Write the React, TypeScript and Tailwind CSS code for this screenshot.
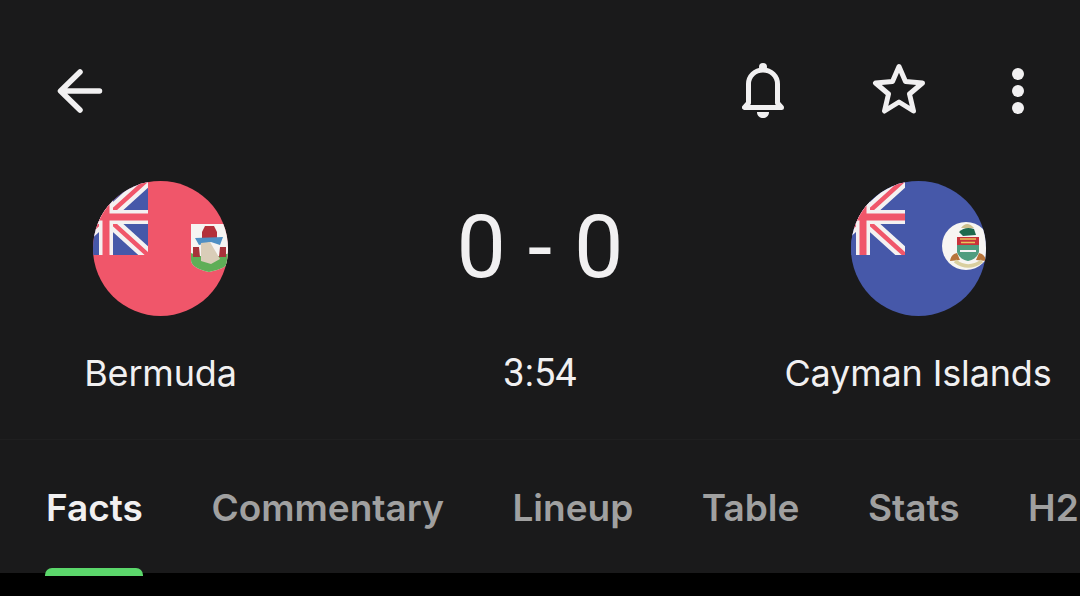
import React from 'react';

const UnionCanton: React.FC<{ x: number; y: number }> = ({ x, y }) => (
  <svg x={x} y={y} width="84" height="76" viewBox="0 0 84 76">
    <path d="M0 0H84V76H0Z" fill="#4658a9" />
    <path d="M0 76L84 0M0 0L84 76" stroke="#f4f1f1" strokeWidth="13" />
    <path d="M0 0L84 76M0 76L84 0" stroke="#f0566a" strokeWidth="4.500" />
    <path d="M42 0V76M0 38H84" stroke="#f4f1f1" strokeWidth="14" />
    <path d="M42 0V76M0 38H84" stroke="#f0566a" strokeWidth="7" />
  </svg>
);

const BermudaFlag: React.FC = () => (
  <svg viewBox="0 0 135 135" className="w-[135px] h-[135px] rounded-full bg-[#f0566a]">
    <UnionCanton x={-29} y={-2} />
    <path d="M98 43H136V79Q136 87 116 91Q98 87 98 79Z" fill="#f6f4f2" />
    <path d="M98 72Q116 80 136 72V79Q136 87 116 91Q98 87 98 79Z" fill="#5fae57" />
    <path d="M109 51L112 45H121L124 51V57H109Z" fill="#b3303a" />
    <path d="M102 57L130 56L127 64L118 61L106 64Z" fill="#4f8fc4" />
    <path d="M100 66H106L107 76H100Z M127 66H133V76H126Z" fill="#a8323a" />
    <path d="M108 62L117 61L127 78L118 83L108 80Z" fill="#d9cdb8" />
  </svg>
);

const CaymanFlag: React.FC = () => (
  <svg viewBox="0 0 135 135" className="w-[135px] h-[135px] rounded-full bg-[#4658a9]">
    <UnionCanton x={-30} y={-2} />
    <circle cx="115" cy="65" r="24" fill="#f7f5f2" />
    <path d="M110 47Q116 39 123 47Z" fill="#cdbf8e" />
    <path d="M108 51Q114 45 123 48L125 54L112 55Z" fill="#1f6a4e" />
    <path d="M106 56H128V64H106Z" fill="#c8333b" />
    <path d="M109 58H125M110 61.500H124" stroke="#e6c35c" strokeWidth="1.500" />
    <path d="M106 64H128V71Q126 78 117 80Q108 78 106 71Z" fill="#4f9d7f" />
    <path d="M109 70H125" stroke="#f3f3f3" strokeWidth="2" />
    <path d="M99 80Q100 73 106 72L109 79Z M125 79L128 72Q134 73 135 80Z" fill="#b7743a" />
    <path d="M104 80Q117 90 131 80" stroke="#d9cf9f" strokeWidth="3.500" fill="none" />
  </svg>
);

const tabs = ['Commentary', 'Lineup', 'Table', 'Stats', 'H2'];

const App: React.FC = () => {
  return (
    <div className="h-[596px] w-[1080px] overflow-hidden bg-black font-['Inter',sans-serif]">
      <div className="h-[573px] bg-[#1a1a1b] text-[#f1f0f1]">
        <header className="flex h-[181px] items-start pt-[63px] pl-[57px] pr-[56px]">
          <svg viewBox="0 0 46 44" className="mt-[6px] h-[44px] w-[46px]" fill="none" stroke="#f1f0f1" strokeWidth="5.500" strokeLinecap="round" strokeLinejoin="round">
            <path d="M42.500 22H5M23 3L3.500 22L23 41" />
          </svg>
          <div className="ml-auto flex items-start">
            <svg viewBox="0 0 42 55" className="h-[55px] w-[42px]" fill="none" stroke="#f1f0f1" strokeWidth="5" strokeLinejoin="round">
              <path d="M2.500 44.500H39.500L35.500 40V21C35.500 13 29 7 21 7C13 7 6.500 13 6.500 21V40Z" />
              <circle cx="21" cy="4" r="4" fill="#f1f0f1" stroke="none" />
              <path d="M15 49H27C27 53 24 55 21 55C18 55 15 53 15 49Z" fill="#f1f0f1" stroke="none" />
            </svg>
            <svg viewBox="0 0 54 52" className="ml-[88px] h-[52px] w-[54px]" fill="none" stroke="#f1f0f1" strokeWidth="5" strokeLinejoin="round">
              <path d="M27 3.500L33.500 18.500L50.500 20L37.500 31L41.500 48L27 39L12.500 48L16.500 31L3.500 20L20.500 18.500Z" />
            </svg>
            <div className="ml-[86px] mt-[5px] flex w-[12px] flex-col gap-[5px]">
              <span className="h-[12px] w-[12px] rounded-full bg-[#f1f0f1]" />
              <span className="h-[12px] w-[12px] rounded-full bg-[#f1f0f1]" />
              <span className="h-[12px] w-[12px] rounded-full bg-[#f1f0f1]" />
            </div>
          </div>
        </header>

        <section className="grid h-[259px] grid-cols-[321px_438px_318px] border-b border-[#1f1f20]">
          <div className="flex flex-col items-center">
            <BermudaFlag />
            <span className="mt-[34px] text-[36px] leading-[46px] tracking-[-0.15px]">Bermuda</span>
          </div>
          <div className="flex flex-col items-center">
            <span className="mt-[14px] font-['Roboto',sans-serif] text-[88px] leading-[104px]">0 - 0</span>
            <span className="mt-[51px] font-['Roboto',sans-serif] text-[38px] leading-[46px]">3:54</span>
          </div>
          <div className="flex flex-col items-center">
            <CaymanFlag />
            <span className="mt-[34px] text-[36px] leading-[46px] tracking-[-0.15px] whitespace-nowrap">Cayman Islands</span>
          </div>
        </section>

        <nav className="relative flex h-[133px] gap-[68.5px] pt-[45px] pl-[46px] text-[37px] leading-[46px] font-semibold whitespace-nowrap">
          <span className="text-[#f1f0f1]">Facts</span>
          {tabs.map((tab) => (
            <span key={tab} className="text-[#a0a0a0]">{tab}</span>
          ))}
          <span className="absolute left-[45px] top-[128px] h-[8px] w-[98px] rounded-t-[7px] bg-[#5bd76b]" />
        </nav>
      </div>
    </div>
  );
};

export default App;
